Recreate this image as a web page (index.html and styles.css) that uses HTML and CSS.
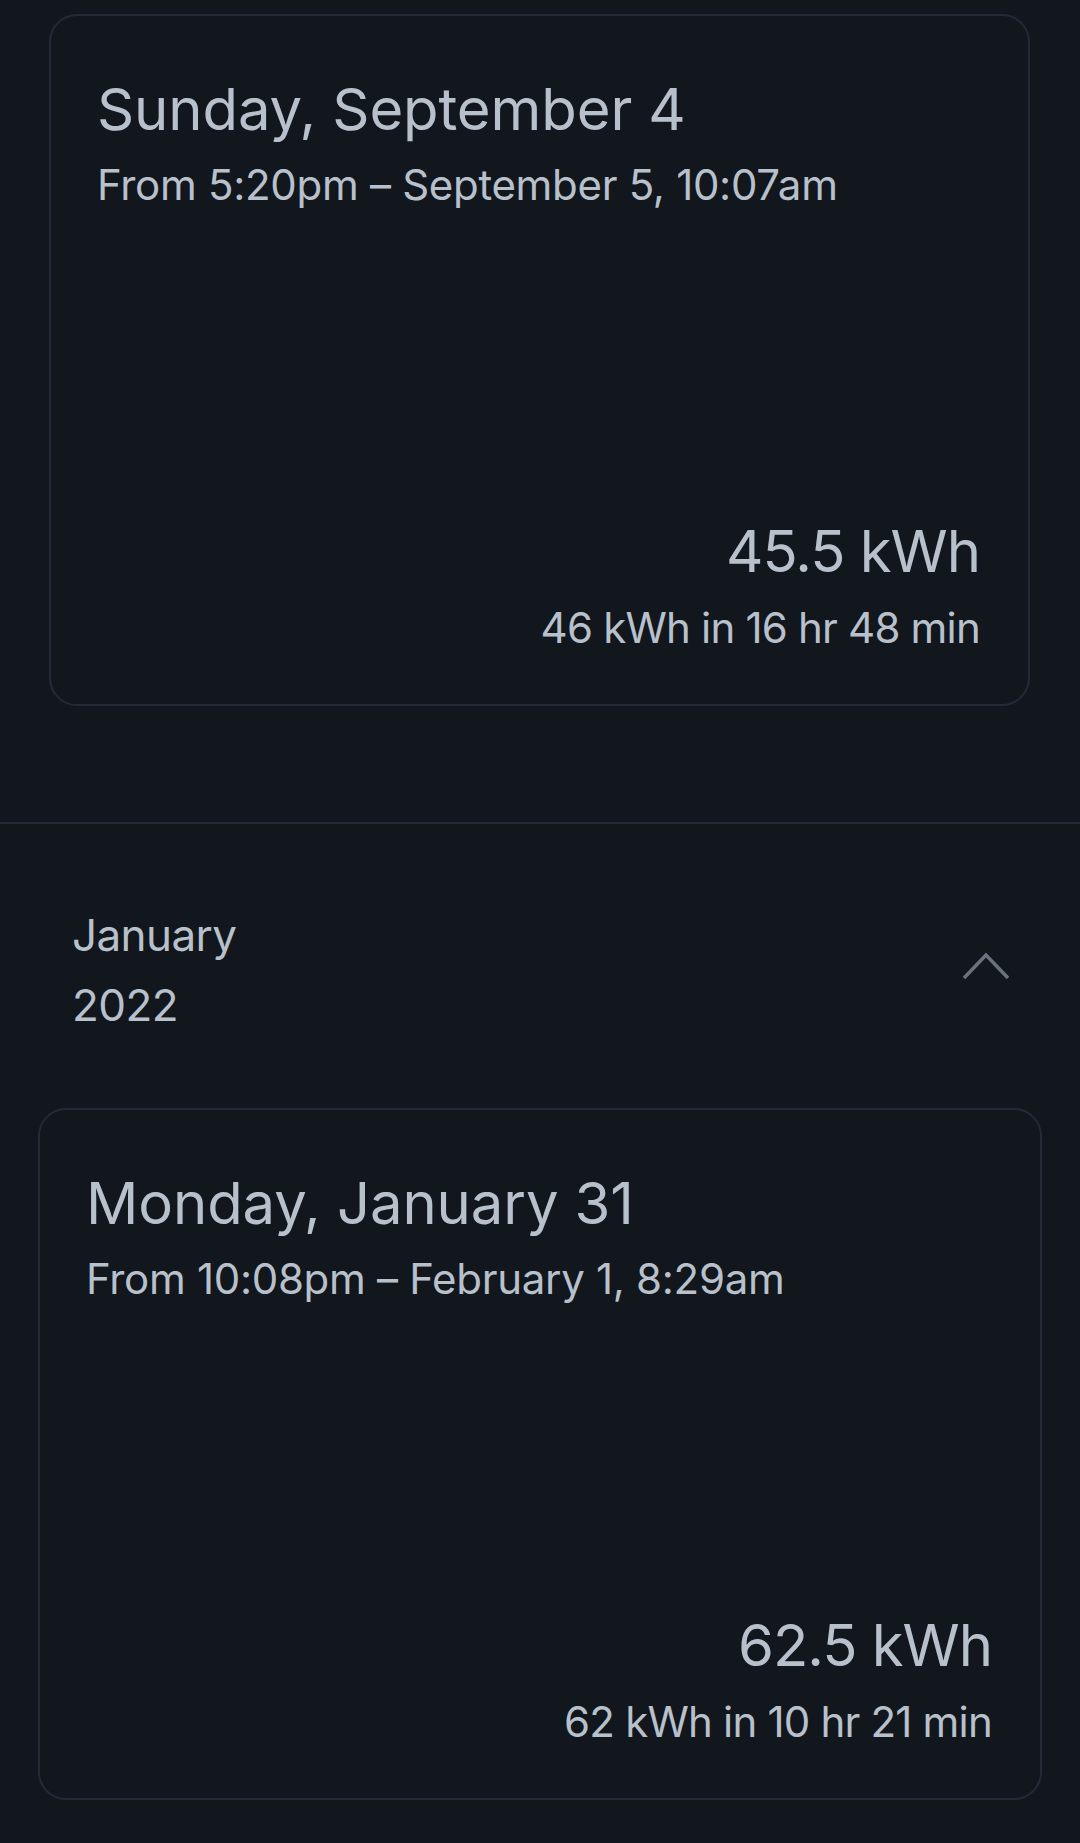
FILE: index.html
```html
<!DOCTYPE html>
<html>
  <head>
    <title>Charging History</title>
    <meta name="viewport" content="width=device-width, initial-scale=1.0">
    <link rel="stylesheet" href="styles.css">
  </head>
  <body>
    <div class="section">
      <div class="card card-first">
        <div class="card-top">
          <div class="card-title">Sunday, September 4</div>
          <div class="card-sub">From 5:20pm – September 5, 10:07am</div>
        </div>
        <div class="card-bottom">
          <div class="amount">45.5 kWh</div>
          <div class="amount-sub">46 kWh in 16 hr 48 min</div>
        </div>
      </div>
    </div>

    <div class="divider"></div>

    <div class="month">
      <div class="month-label">
        <div class="month-name">January</div>
        <div class="month-year">2022</div>
      </div>
      <svg class="chevron" width="48" height="30" viewBox="0 0 48 30">
        <polyline points="2,27 24,4 46,27" fill="none" stroke="#6c727a" stroke-width="3.5"/>
      </svg>
    </div>

    <div class="section">
      <div class="card card-second">
        <div class="card-top">
          <div class="card-title">Monday, January 31</div>
          <div class="card-sub">From 10:08pm – February 1, 8:29am</div>
        </div>
        <div class="card-bottom">
          <div class="amount">62.5 kWh</div>
          <div class="amount-sub">62 kWh in 10 hr 21 min</div>
        </div>
      </div>
    </div>
  </body>
</html>
```

FILE: styles.css
```css
body {
  background-color: #12161d;
  color: #b8c1cb;
  font-family: 'Inter', 'Liberation Sans', sans-serif;
  margin: 0;
  padding: 0;
}
.section {
  padding-top: 14px;
}
.card {
  box-sizing: border-box;
  height: 692px;
  border: 2px solid #252b32;
  border-radius: 28px;
  padding: 58px 48px 41px 46px;
  display: flex;
  flex-direction: column;
  justify-content: space-between;
}
.card-first {
  margin: 0 50px 0 49px;
}
.card-second {
  margin: 0 38px 0 38px;
}
.card-title {
  font-size: 58px;
  line-height: 70px;
  letter-spacing: -0.1px;
}
.card-sub {
  margin-top: 6px;
  font-size: 42px;
  line-height: 70px;
  letter-spacing: -0.3px;
}
.card-bottom {
  text-align: right;
}
.amount {
  font-size: 58px;
  line-height: 70px;
  letter-spacing: -1px;
}
.amount-sub {
  margin-top: 7px;
  font-size: 42px;
  line-height: 70px;
  letter-spacing: -0.8px;
}
.divider {
  margin-top: 116px;
  height: 2px;
  background-color: #252b32;
}
.month {
  display: flex;
  justify-content: space-between;
  align-items: center;
  padding: 76px 70px 50px 72px;
}
.month-name,
.month-year {
  font-size: 44px;
  line-height: 70px;
  letter-spacing: -0.6px;
}
.month-year {
  margin-bottom: 4px;
}
.chevron {
  display: block;
  margin-bottom: 12px;
}
```
